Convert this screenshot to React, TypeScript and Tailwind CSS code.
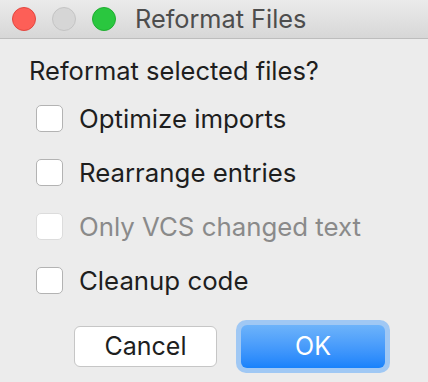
export default function App() {
  const options = [
    { label: 'Optimize imports', disabled: false },
    { label: 'Rearrange entries', disabled: false },
    { label: 'Only VCS changed text', disabled: true },
    { label: 'Cleanup code', disabled: false },
  ];

  return (
    <div className="h-[382px] w-[428px] overflow-hidden bg-[#ececec] font-['Inter',sans-serif]">
      <div className="flex h-[39px] items-center border-b border-[#bdbdbd] bg-gradient-to-b from-[#ebebeb] to-[#d7d7d7] pl-[12px]">
        <div className="flex gap-[16px]">
          <span className="h-[24px] w-[24px] rounded-full border border-[#e2463f] bg-[#fd5f57]" />
          <span className="h-[24px] w-[24px] rounded-full border border-[#c4c4c4] bg-[#d6d6d6]" />
          <span className="h-[24px] w-[24px] rounded-full border border-[#1fae30] bg-[#2ac73f]" />
        </div>
        <span className="ml-[19px] text-[25.3px] leading-none text-[#4d4d4d]">Reformat Files</span>
      </div>

      <div className="pl-[29px] pt-[17px]">
        <p className="text-[25.5px] leading-[30px] text-[#1e1e1e]">Reformat selected files?</p>
      </div>

      <div className="mt-[19px] flex flex-col gap-[27px] pl-[36px]">
        {options.map((o) => (
          <label key={o.label} className="flex h-[27px] items-center gap-[16px]">
            <span
              className={`h-[27px] w-[27px] rounded-[5px] border bg-white ${o.disabled ? 'border-[#dcdcdc]' : 'border-[#b3b3b3]'}`}
            />
            <span className={`text-[25.8px] leading-none ${o.disabled ? 'text-[#8a8a8a]' : 'text-[#1e1e1e]'}`}>{o.label}</span>
          </label>
        ))}
      </div>

      <div className="mt-[26px] flex items-center pl-[74px]">
        <button className="h-[41px] w-[143px] rounded-[6px] border border-[#c6c6c6] bg-white text-[25px] leading-none text-[#1e1e1e]">
          Cancel
        </button>
        <div className="ml-[19px] rounded-[10px] bg-[#a0c8f4] p-[5px]">
          <button className="block h-[43px] w-[144px] rounded-[6px] bg-gradient-to-b from-[#6db3fa] to-[#1782fb] text-[25px] leading-none text-white">
            OK
          </button>
        </div>
      </div>
    </div>
  );
}
